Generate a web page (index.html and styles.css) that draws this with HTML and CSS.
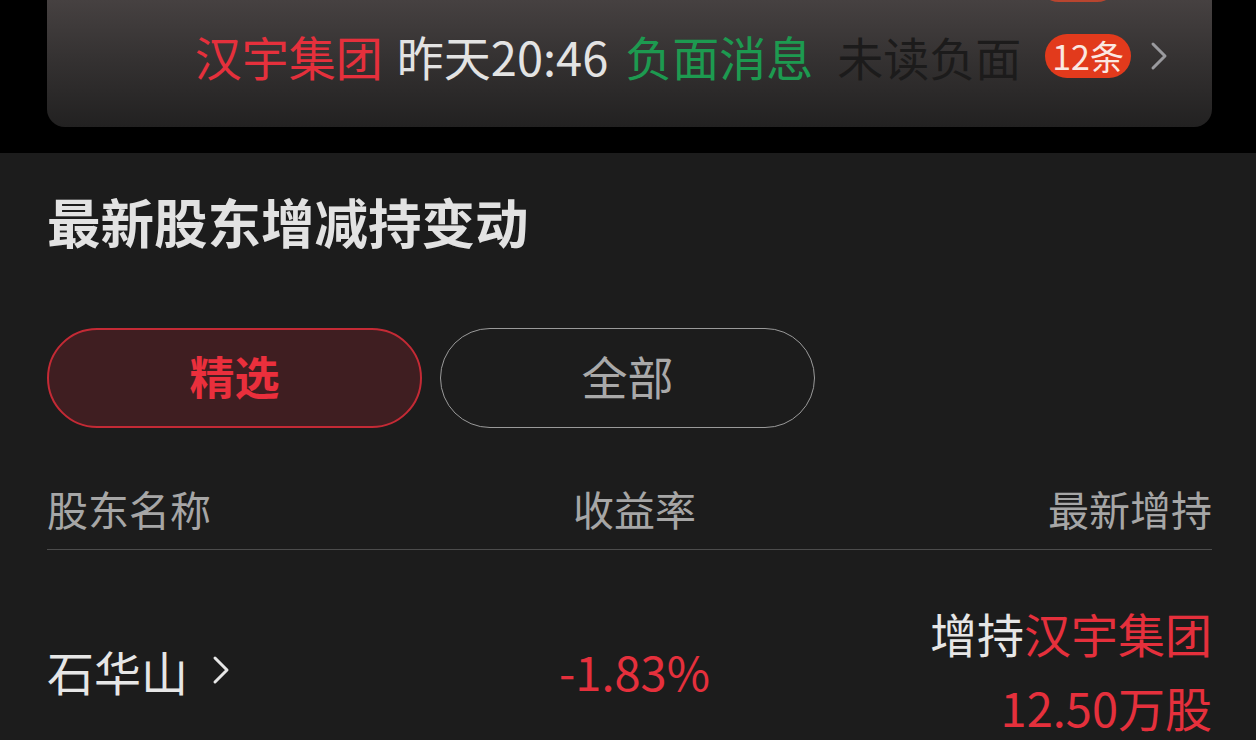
FILE: index.html
```html
<!DOCTYPE html>
<html lang="zh-CN">
<head>
<meta charset="utf-8">
<link rel="stylesheet" href="styles.css">
</head>
<body>
<div class="top">
  <div class="card">
    <span class="badge-prev"></span>
    <div class="news-row">
      <span class="red">汉宇集团</span>
      <span class="time">昨天20:46</span>
      <span class="green">负面消息</span>
      <span class="unread">未读负面</span>
      <span class="badge">12条</span>
      <svg class="chev" width="18" height="30" viewBox="0 0 18 30"><path d="M3 3 L15 15 L3 27" fill="none" stroke="#9a9a9e" stroke-width="3" stroke-linecap="round" stroke-linejoin="round"/></svg>
    </div>
  </div>
</div>
<div class="panel">
  <h1 class="title">最新股东增减持变动</h1>
  <div class="tabs">
    <button class="tab active">精选</button>
    <button class="tab">全部</button>
  </div>
  <div class="thead">
    <span class="c1">股东名称</span>
    <span class="c2">收益率</span>
    <span class="c3">最新增持</span>
  </div>
  <div class="trow">
    <div class="c1 name">石华山<svg class="chev2" width="18" height="30" viewBox="0 0 18 30"><path d="M3 3 L15 15 L3 27" fill="none" stroke="#e6e6e6" stroke-width="3" stroke-linecap="round" stroke-linejoin="round"/></svg></div>
    <div class="c2 rate">-1.83%</div>
    <div class="c3 change">
      <div><span class="light">增持</span><span class="red">汉宇集团</span></div>
      <div class="red">12.50万股</div>
    </div>
  </div>
</div>
</body>
</html>
```
FILE: styles.css
```css
* { box-sizing: border-box; }
html, body { margin: 0; padding: 0; }
body {
  width: 1256px;
  height: 740px;
  overflow: hidden;
  background: #000;
  font-family: "Noto Sans CJK SC", "Noto Sans", sans-serif;
}
.top {
  height: 153px;
  padding: 0 44px 0 47px;
  background: #000;
}
.card {
  position: relative;
  height: 127px;
  border-radius: 0 0 18px 18px;
  background: linear-gradient(#464141 0%, #353232 45%, #222121 100%);
  padding-top: 26px;
  overflow: hidden;
}
.badge-prev {
  position: absolute;
  top: -40px;
  left: 991px;
  width: 80px;
  height: 42px;
  border-radius: 21px;
  background: #b8452f;
}
.news-row {
  display: flex;
  align-items: center;
  justify-content: flex-end;
  height: 60px;
  padding-right: 44px;
  font-size: 47px;
  line-height: 60px;
  white-space: nowrap;
}
.red { color: #e5303c; }
.green { color: #1d9a50; margin-left: 17px; }
.time { color: #e3e3e3; margin-left: 14px; }
.unread { color: #1c1b1b; margin-left: 24px; font-size: 46px; }
.badge {
  margin-left: 24px;
  height: 44px;
  line-height: 44px;
  padding: 0 7px;
  border-radius: 22px;
  background: #e23a1c;
  color: #fbe8e2;
  font-size: 34px;
}
.chev { margin-left: 19px; }
.panel {
  background: #1c1c1c;
  height: 587px;
  padding: 0 44px 0 47px;
  overflow: hidden;
}
.title {
  margin: 0;
  padding-top: 36px;
  font-size: 53.5px;
  line-height: 64px;
  font-weight: 700;
  color: #e2e2e2;
}
.tabs {
  display: flex;
  gap: 18px;
  margin-top: 75px;
}
.tab {
  width: 375px;
  height: 100px;
  border-radius: 50px;
  border: 1.5px solid #9a9a9a;
  background: transparent;
  color: #a9a9a9;
  font-family: inherit;
  font-size: 46px;
  padding: 0 0 6px;
}
.tab.active {
  border: 2px solid #c42a35;
  background: #3f1e21;
  color: #ea2f3c;
  font-weight: 700;
  font-size: 45px;
}
.thead {
  display: grid;
  grid-template-columns: 1fr 1fr 1fr;
  align-items: center;
  margin-top: 50px;
  height: 72px;
  padding-bottom: 28px;
  font-size: 41px;
  color: #a6a6a6;
  border-bottom: 1.5px solid #4c4c4c;
}
.c1 { text-align: left; }
.c2 { text-align: center; padding-left: 10px; }
.c3 { text-align: right; }
.trow {
  display: grid;
  grid-template-columns: 1fr 1fr 1fr;
  align-items: center;
  padding-top: 46px;
  height: 190px;
  font-size: 47px;
}
.name {
  color: #e6e6e6;
  display: flex;
  align-items: center;
}
.chev2 { margin-left: 24px; }
.rate { color: #e5303c; }
.change { line-height: 74px; }
.light { color: #e6e6e6; }
```
